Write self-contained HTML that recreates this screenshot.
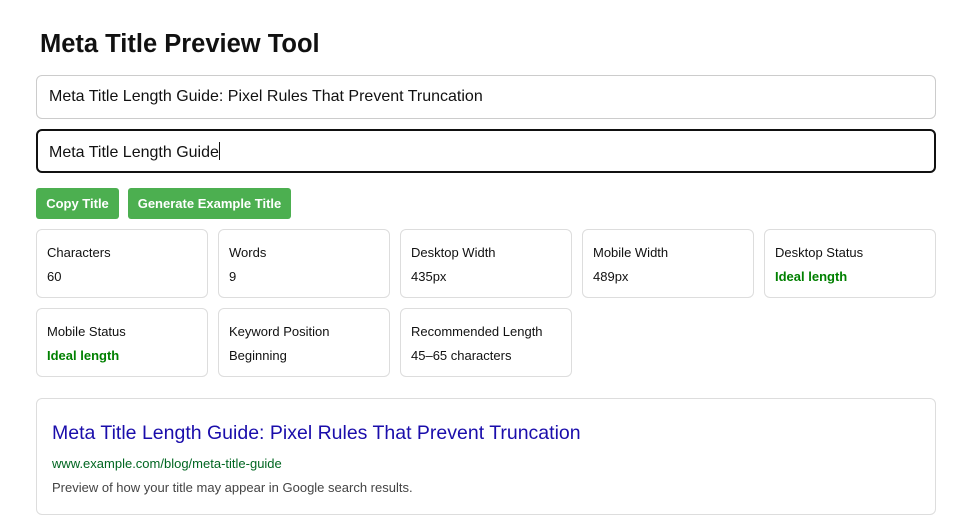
<!DOCTYPE html>
<html><head><style>
*{box-sizing:border-box;margin:0;padding:0}
body{width:970px;height:517px;background:#fff;font-family:"Liberation Sans",sans-serif;color:#111;position:relative;overflow:hidden}
h1{position:absolute;left:40px;top:30px;font-size:25.5px;font-weight:bold}
.in{position:absolute;left:36px;width:900px;height:44px;border:1px solid #ccc;border-radius:6px;font-size:16px;padding:12px 12px;line-height:18px}
.in2{border:2px solid #111;padding:11px 11px}
.btn{position:absolute;top:188px;height:31px;background:#4caf50;color:#fff;font-size:13px;font-weight:bold;border-radius:3px;line-height:31px;text-align:center}
.card{position:absolute;width:172px;height:69px;border:1px solid #ddd;border-radius:6px;padding:11px 10px;font-size:13px;line-height:24px}
.g{color:#008000;font-weight:bold}
.prev{position:absolute;left:36px;top:398px;width:900px;height:117px;border:1px solid #ddd;border-radius:6px;padding:20px 15px}
</style></head><body>
<h1>Meta Title Preview Tool</h1>
<div class="in" style="top:75px">Meta Title Length Guide: Pixel Rules That Prevent Truncation</div>
<div class="in in2" style="top:129px">Meta Title Length Guide<span style="display:inline-block;width:1px;height:18px;background:#111;vertical-align:-3px"></span></div>
<div class="btn" style="left:36px;width:83px">Copy Title</div>
<div class="btn" style="left:128px;width:163px">Generate Example Title</div>
<div class="card" style="left:36px;top:229px">Characters<br>60</div>
<div class="card" style="left:218px;top:229px">Words<br>9</div>
<div class="card" style="left:400px;top:229px">Desktop Width<br>435px</div>
<div class="card" style="left:582px;top:229px">Mobile Width<br>489px</div>
<div class="card" style="left:764px;top:229px">Desktop Status<br><span class="g">Ideal length</span></div>
<div class="card" style="left:36px;top:308px">Mobile Status<br><span class="g">Ideal length</span></div>
<div class="card" style="left:218px;top:308px">Keyword Position<br>Beginning</div>
<div class="card" style="left:400px;top:308px">Recommended Length<br>45–65 characters</div>
<div class="prev">
<div style="color:#1a0dab;font-size:19.5px;line-height:28px">Meta Title Length Guide: Pixel Rules That Prevent Truncation</div>
<div style="color:#006621;font-size:13px;margin-top:8px;line-height:18px">www.example.com/blog/meta-title-guide</div>
<div style="color:#444;font-size:13px;margin-top:6px;line-height:18px">Preview of how your title may appear in Google search results.</div>
</div>
</body></html>
